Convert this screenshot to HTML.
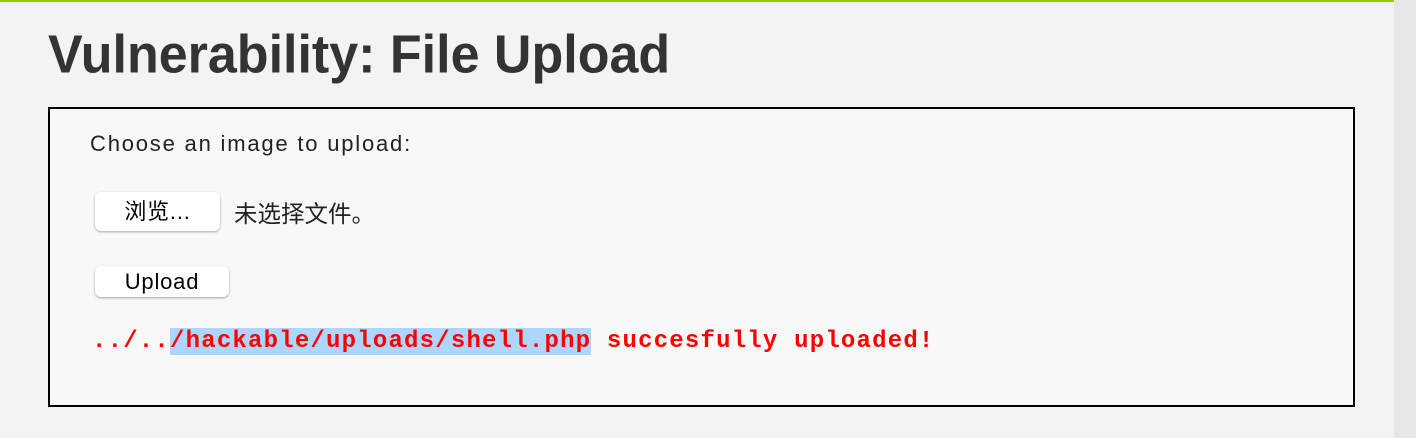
<!DOCTYPE html>
<html><head><meta charset="utf-8"><style>
html,body{margin:0;padding:0;width:1416px;height:438px;overflow:hidden;background:#f3f3f3;font-family:"Liberation Sans","Noto Sans CJK SC",sans-serif;}
#top{position:absolute;left:0;top:0;width:1394px;height:2px;background:#8fcc00;}
#strip{position:absolute;left:1394px;top:0;width:22px;height:438px;background:#e6e6e6;}
h1{position:absolute;left:48px;top:24px;margin:0;font-size:52px;font-weight:bold;color:#333;letter-spacing:0;transform:scaleY(1.03);transform-origin:0 0;}
#box{position:absolute;left:48px;top:107px;width:1303px;height:296px;border:2px solid #000;background:#f7f8f7;}
.t{position:absolute;font-size:22px;color:#222;letter-spacing:1.8px;}
.btn{position:absolute;background:#fff;border-radius:6px;box-shadow:0 1px 2px rgba(0,0,0,.35);font-size:22px;color:#000;text-align:center;letter-spacing:0.8px;}
#msg{position:absolute;left:42px;top:219px;font-family:"Liberation Mono",monospace;font-weight:bold;font-size:24px;letter-spacing:1.2px;color:#f00;white-space:pre;}
#msg span{background:#acd6fe;}
</style></head><body>
<div id="top"></div><div id="strip"></div>
<h1>Vulnerability: File Upload</h1>
<div id="box">
<div class="t" style="left:40px;top:22px;">Choose an image to upload:</div>
<div class="btn" style="left:45px;top:83px;width:125px;height:39px;line-height:39px;">浏览...</div>
<div class="t" style="left:184px;top:86px;font-size:23.5px;letter-spacing:0;">未选择文件。</div>
<div class="btn" style="left:45px;top:157px;width:134px;height:31px;line-height:31px;">Upload</div>
<div id="msg">../..<span>/hackable/uploads/shell.php</span> succesfully uploaded!</div>
</div>
</body></html>
